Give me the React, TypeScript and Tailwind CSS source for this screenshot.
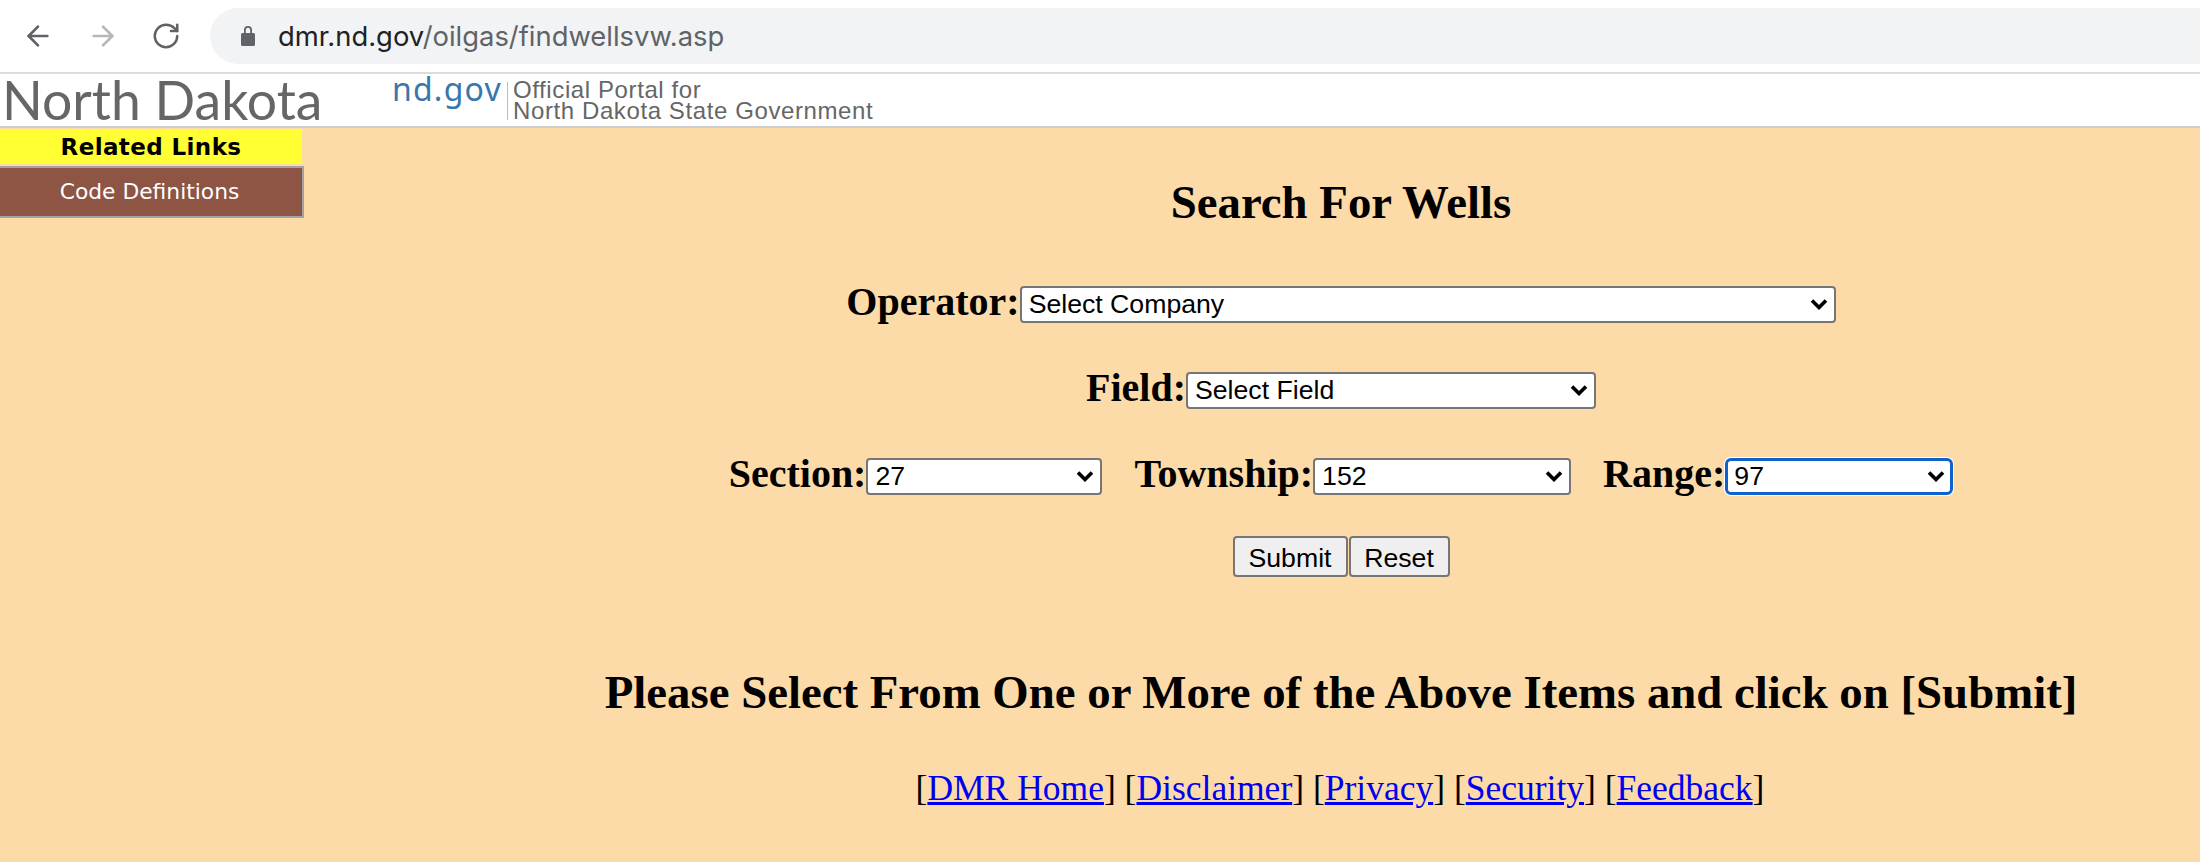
import type { ReactNode } from 'react'
import { ArrowLeft, ArrowRight, RotateCw } from 'lucide-react'

const serif = "font-['Liberation_Serif',serif]"

function Toolbar() {
  return (
    <div className="h-[74px] bg-white border-b-2 border-[#dadce0] flex items-start">
      <div className="flex items-center h-[72px] w-[210px] shrink-0">
        <ArrowLeft className="w-[32px] h-[32px] ml-[22px] text-[#5f6368]" strokeWidth={2} />
        <ArrowRight className="w-[32px] h-[32px] ml-[33px] text-[#b5b7ba]" strokeWidth={2} />
        <RotateCw className="w-[30px] h-[30px] ml-[32px] text-[#5f6368]" strokeWidth={2} />
      </div>
      <div className="mt-[8px] h-[56px] flex-1 bg-[#f1f3f4] rounded-l-[28px] flex items-center pl-[29px]">
        <svg width="18" height="24" viewBox="0 0 18 24" className="shrink-0">
          <path
            d="M5 9V6a4 4 0 0 1 8 0v3h1.5A1.5 1.5 0 0 1 16 10.500v10a1.500 1.500 0 0 1-1.500 1.500h-11A1.500 1.500 0 0 1 2 20.500v-10A1.500 1.500 0 0 1 3.500 9H5zm1.800 0h4.400V6a2.200 2.200 0 0 0-4.400 0v3z"
            fill="#5f6368"
          />
        </svg>
        <span className="ml-[21px] text-[27.400px] leading-[36px] font-['Inter',sans-serif] text-[#5f6368]">
          <span className="text-[#202124]">dmr.nd.gov</span>/oilgas/findwellsvw.asp
        </span>
      </div>
    </div>
  )
}

function Banner() {
  return (
    <div className="h-[54px] bg-white border-b-2 border-[#cfcfcf] flex items-start">
      <div className="w-[392px] shrink-0 pl-[2px] text-[53.500px] leading-[50px] text-[#666666] font-['Lato',sans-serif]">
        North Dakota
      </div>
      <div className="w-[115px] shrink-0 text-[32px] tracking-[1.2px] leading-[30px] text-[#3a76ae] font-['Noto_Sans',sans-serif]">
        nd.gov
      </div>
      <div className="mt-[8px] w-px h-[38px] bg-[#bbbbbb]" />
      <div className="ml-[5px] mt-[5px] text-[24px] tracking-[0.6px] leading-[21px] text-[#666666] font-['Liberation_Sans',sans-serif] whitespace-nowrap">
        <div>Official Portal for</div>
        <div>North Dakota State Government</div>
      </div>
    </div>
  )
}

function Sidebar() {
  return (
    <div className="w-[304px] shrink-0 pt-px font-['DejaVu_Sans',sans-serif]">
      <div className="h-[35px] w-[302px] pt-[2px] bg-[#ffff33] text-black text-[23px] tracking-[0.4px] font-bold flex items-center justify-center">
        Related Links
      </div>
      <div className="mt-[2px] h-[52px] pr-[3px] bg-[#8e5444] text-white text-[21.800px] border-r-2 border-b-2 border-t-2 border-[#a3a3a3] flex items-center justify-center">
        Code Definitions
      </div>
    </div>
  )
}

function Label({ children }: { children: ReactNode }) {
  return <span className="text-[40px] leading-[52px] font-bold text-black">{children}</span>
}

function SelectBox({ value, width, focused }: { value: string; width: string; focused?: boolean }) {
  return (
    <div className={`relative mt-[10px] h-[37px] ${width}`}>
      <select
        defaultValue={value}
        className={
          focused
            ? "appearance-none block w-full h-full bg-white border-[3px] border-[#0f62cc] rounded-[6px] ring-1 ring-white pl-[6px] text-[26.670px] leading-none text-black font-['Liberation_Sans',sans-serif]"
            : "appearance-none block w-full h-full bg-white border-2 border-[#767676] rounded-[4px] pl-[7px] text-[26.670px] leading-none text-black font-['Liberation_Sans',sans-serif]"
        }
      >
        <option>{value}</option>
      </select>
      <svg
        viewBox="0 0 18 12"
        className="absolute right-[8px] top-[12px] w-[18px] h-[12px] pointer-events-none"
      >
        <path d="M2 2.500L9 9.500L16 2.500" fill="none" stroke="#000" strokeWidth="3.600" />
      </svg>
    </div>
  )
}

function SearchForm() {
  return (
    <div className={`flex-1 flex flex-col items-center text-black ${serif}`}>
      <h2 className="mt-[46px] text-[46.800px] leading-[56px] font-bold">Search For Wells</h2>

      <div className="mt-[46px] flex items-start">
        <Label>Operator:</Label>
        <SelectBox value="Select Company" width="w-[816px]" />
      </div>

      <div className="mt-[34px] flex items-start">
        <Label>Field:</Label>
        <SelectBox value="Select Field" width="w-[410px]" />
      </div>

      <div className="mt-[34px] flex items-start">
        <Label>Section:</Label>
        <SelectBox value="27" width="w-[236px]" />
        <div className="w-[32px]" />
        <Label>Township:</Label>
        <SelectBox value="152" width="w-[258px]" />
        <div className="w-[32px]" />
        <Label>Range:</Label>
        <SelectBox value="97" width="w-[228px]" focused />
      </div>

      <div className="mt-[36px] flex gap-px text-[26.670px] font-['Liberation_Sans',sans-serif]">
        <button className="w-[115px] h-[41px] bg-[#efefef] border-2 border-[#767676] rounded-[4px]">Submit</button>
        <button className="w-[101px] h-[41px] bg-[#efefef] border-2 border-[#767676] rounded-[4px]">Reset</button>
      </div>

      <h2 className="mt-[88px] text-[46.800px] leading-[54px] font-bold whitespace-nowrap">
        Please Select From One or More of the Above Items and click on [Submit]
      </h2>

      <div className="mt-[48px] pr-[2px] text-[35.500px] leading-[42px] whitespace-pre">
        [<a href="#" className="text-[#0000ee] underline">DMR Home</a>] [
        <a href="#" className="text-[#0000ee] underline">Disclaimer</a>] [
        <a href="#" className="text-[#0000ee] underline">Privacy</a>] [
        <a href="#" className="text-[#0000ee] underline">Security</a>] [
        <a href="#" className="text-[#0000ee] underline">Feedback</a>]
      </div>
    </div>
  )
}

export default function App() {
  return (
    <div className="h-[862px] overflow-hidden bg-[#fddba9] flex flex-col">
      <Toolbar />
      <Banner />
      <div className="flex flex-1">
        <Sidebar />
        <div className="w-[178px] shrink-0" />
        <SearchForm />
      </div>
    </div>
  )
}
